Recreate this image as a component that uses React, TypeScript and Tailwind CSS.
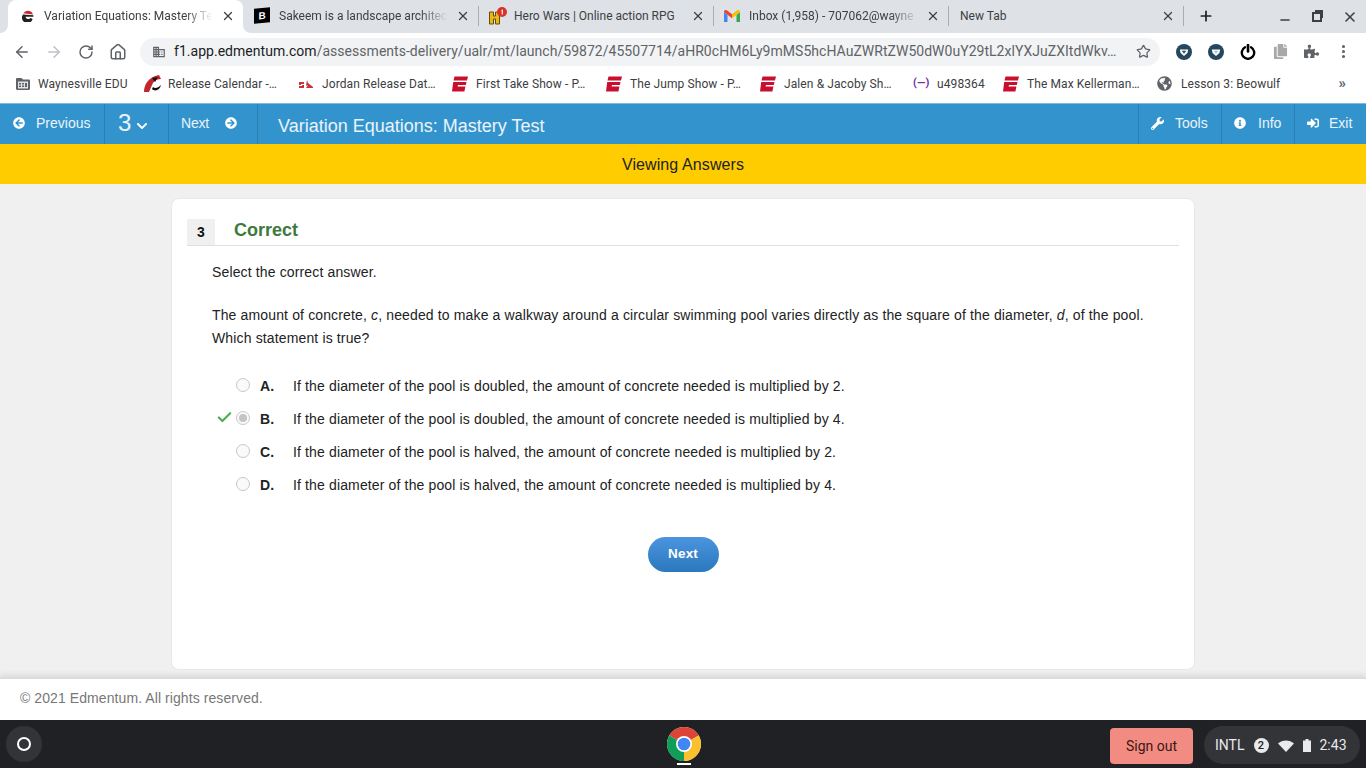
import React from 'react';
import { ArrowLeft, ArrowRight, RotateCw, Home, Star, X, Plus, Minus, MoreVertical, Check } from 'lucide-react';
import { FaArrowCircleLeft, FaArrowCircleRight, FaChevronDown, FaWrench, FaInfoCircle, FaSignInAlt, FaPuzzlePiece, FaCopy, FaGlobeAmericas } from 'react-icons/fa';

function EspnIcon() {
  return (
    <svg width="16" height="16" viewBox="0 0 16 16" className="shrink-0">
      <path d="M2.5 0.5H16L15 4.5H1.5ZM1.2 6H14.5L13.8 9H6L5.6 10.5H13.4L12.4 15.5H0Z" fill="#c8102e" />
    </svg>
  );
}

function ReleaseIcon() {
  return (
    <svg width="17" height="18" viewBox="0 0 17 18" className="shrink-0">
      <path d="M0 17C0 10 4 2 15 0L17 4C12 4 9 7 8 10L5 17Z" fill="#c1272d" />
      <path d="M9 12C11 14 14 13 17 10C16 15 11 17 8 14Z" fill="#111" />
      <path d="M8 3L11 7L14 2Z" fill="#111" />
    </svg>
  );
}

function JordanIcon() {
  return (
    <svg width="16" height="10" viewBox="0 0 16 10" className="shrink-0">
      <path d="M1 3H6V5H3V6H6V9H1V7H4V6H1ZM9 1L10 4L15 8V9H8L10 6L8 7Z" fill="#c8343a" />
    </svg>
  );
}

function HeroIcon() {
  return (
    <svg width="20" height="18" viewBox="0 0 20 18" className="shrink-0">
      <path d="M0.5 5H4.5V9H6.5V5H10.5V17H6.5V12H4.5V17H0.5Z" fill="#e8b71c" stroke="#6b4a08" strokeWidth="1" />
      <circle cx="13" cy="5" r="5" fill="#d9342b" />
      <path d="M12.5 3L13.8 2.4V7.5H12.7V3.8L12.2 4Z" fill="#fff" />
    </svg>
  );
}

function GmailIcon() {
  return (
    <svg width="16" height="12" viewBox="0 0 16 12" className="shrink-0">
      <path d="M0 2V12H3.5V5Z" fill="#4285f4" />
      <path d="M16 2V12H12.5V5Z" fill="#34a853" />
      <path d="M0 2C0 0 2 -0.5 3.5 0.7L8 4.2V8.3L0 2Z" fill="#ea4335" />
      <path d="M16 2C16 0 14 -0.5 12.5 0.7L8 4.2V8.3L16 2Z" fill="#fbbc04" />
    </svg>
  );
}

function BleacherIcon() {
  return (
    <span className="w-[16px] h-[15px] shrink-0 bg-black text-white text-[10px] leading-[15px] font-black text-center -skew-y-6 font-['Liberation_Sans',sans-serif]">
      B
    </span>
  );
}

function EdmentumIcon() {
  return (
    <svg width="12" height="12" viewBox="0 0 12 12" className="shrink-0">
      <path d="M1.2 3.3A5.5 5.5 0 0 1 11 4.5L1.2 3.3Z" fill="#c92a2a" />
      <path d="M1 4.5A5.4 5.4 0 1 0 10.6 9L8.6 8A3 3 0 0 1 3.4 6.8H11.4V5.2Z" fill="#222" />
    </svg>
  );
}

function ShieldIcon({ inner }: { inner: string }) {
  return (
    <svg width="16" height="16" viewBox="0 0 16 16" className="shrink-0">
      <circle cx="8" cy="8" r="8" fill="#24475f" />
      <path d="M3.8 5.4H12.2L11.4 9L8 12L4.6 9Z" fill="#fff" />
      <path d="M5.8 6.8H10.2L8 9.8Z" fill={inner} />
    </svg>
  );
}

function PowerIcon() {
  return (
    <svg width="16" height="16" viewBox="0 0 16 16" className="shrink-0">
      <path d="M5 3.2A6.2 6.2 0 1 0 11 3.2" fill="none" stroke="#000" strokeWidth="2.4" strokeLinecap="round" />
      <path d="M8 0.8V7.5" stroke="#000" strokeWidth="2.6" strokeLinecap="round" />
    </svg>
  );
}

function DomainIcon() {
  return (
    <svg width="14" height="14" viewBox="0 0 24 24" className="shrink-0" fill="#5f6368">
      <path d="M12 7V3H2v18h20V7H12zM6 19H4v-2h2v2zm0-4H4v-2h2v2zm0-4H4V9h2v2zm0-4H4V5h2v2zm4 12H8v-2h2v2zm0-4H8v-2h2v2zm0-4H8V9h2v2zm0-4H8V5h2v2zm10 12h-8v-2h2v-2h-2v-2h2v-2h-2V9h8v10zm-2-8h-2v2h2v-2zm0 4h-2v2h2v-2z" />
    </svg>
  );
}

function ManagedFolderIcon() {
  return (
    <svg width="14" height="12" viewBox="0 0 14 12" className="shrink-0">
      <path d="M1.2 0H5.5L7 1.6H12.8C13.5 1.6 14 2.1 14 2.8V10.8C14 11.5 13.5 12 12.8 12H1.2C0.5 12 0 11.5 0 10.8V1.2C0 0.5 0.5 0 1.2 0Z" fill="#5f6368" />
      <path d="M2 3.5H12V10.5H2Z" fill="#e3e4e6" />
      <path d="M3 5H5V6.5H3ZM3 7.5H5V9H3ZM6 5H8V6.5H6ZM6 7.5H8V9H6ZM9 5H11V9H9Z" fill="#5f6368" />
    </svg>
  );
}

function ChromeLogo() {
  return (
    <svg width="34" height="34" viewBox="0 0 34 34">
      <circle cx="17" cy="17" r="17" fill="#f1f3f4" />
      <path d="M17 17L2.3 8.5A17 17 0 0 1 31.7 8.5Z" fill="#db4437" />
      <path d="M17 17L31.7 8.5A17 17 0 0 1 17 34Z" fill="#fbc02d" />
      <path d="M17 17L17 34A17 17 0 0 1 2.3 8.5Z" fill="#0f9d58" />
      <circle cx="17" cy="17" r="8" fill="#fff" />
      <circle cx="17" cy="17" r="6.3" fill="#4285f4" />
    </svg>
  );
}

const tabs = [
  { icon: <BleacherIcon />, title: 'Sakeem is a landscape architec', fade: true },
  { icon: <HeroIcon />, title: 'Hero Wars | Online action RPG', fade: false },
  { icon: <GmailIcon />, title: 'Inbox (1,958) - 707062@wayne', fade: true },
];

const bookmarks = [
  { icon: <ManagedFolderIcon />, label: 'Waynesville EDU', w: 'w-[128px]', gap: 'gap-[8px]' },
  { icon: <ReleaseIcon />, label: 'Release Calendar -…', w: 'w-[154px]', gap: 'gap-[7px]' },
  { icon: <JordanIcon />, label: 'Jordan Release Dat…', w: 'w-[154px]', gap: 'gap-[8px]' },
  { icon: <EspnIcon />, label: 'First Take Show - P…', w: 'w-[154px]', gap: 'gap-[8px]' },
  { icon: <EspnIcon />, label: 'The Jump Show - P…', w: 'w-[154px]', gap: 'gap-[8px]' },
  { icon: <EspnIcon />, label: 'Jalen & Jacoby Sh…', w: 'w-[153px]', gap: 'gap-[8px]' },
  { icon: <span className="w-[16px] text-[#6a2ea8] text-[11px] font-bold text-center shrink-0">(—)</span>, label: 'u498364', w: 'w-[90px]', gap: 'gap-[8px]' },
  { icon: <EspnIcon />, label: 'The Max Kellerman…', w: 'w-[154px]', gap: 'gap-[8px]' },
  { icon: <FaGlobeAmericas className="w-[15px] h-[15px] text-[#5f6368] shrink-0" />, label: 'Lesson 3: Beowulf', w: 'w-[160px]', gap: 'gap-[9px]' },
];

const options = [
  { letter: 'A.', text: 'If the diameter of the pool is doubled, the amount of concrete needed is multiplied by 2.' },
  { letter: 'B.', text: 'If the diameter of the pool is doubled, the amount of concrete needed is multiplied by 4.', picked: true },
  { letter: 'C.', text: 'If the diameter of the pool is halved, the amount of concrete needed is multiplied by 2.' },
  { letter: 'D.', text: 'If the diameter of the pool is halved, the amount of concrete needed is multiplied by 4.' },
];

export default function App() {
  return (
    <div className="h-screen flex flex-col overflow-hidden bg-[#f0f0f0] font-['Liberation_Sans',sans-serif]">
      {/* browser chrome */}
      <div className="h-[33px] shrink-0 bg-[#dee1e6] flex items-center pl-[8px] pb-[2px] font-['Roboto',sans-serif] text-[12px] text-[#3c4043]">
        <div className="relative w-[235px] h-[33px] -mb-[2px] bg-white rounded-t-[8px] flex items-center pl-[14px] pr-[8px] pb-[2px]">
          <span className="absolute -left-[8px] bottom-0 w-[8px] h-[8px] bg-white">
            <span className="block w-[8px] h-[8px] bg-[#dee1e6] rounded-br-[8px]" />
          </span>
          <span className="absolute -right-[8px] bottom-0 w-[8px] h-[8px] bg-white">
            <span className="block w-[8px] h-[8px] bg-[#dee1e6] rounded-bl-[8px]" />
          </span>
          <EdmentumIcon />
          <span className="ml-[10px] flex-1 whitespace-nowrap [mask-image:linear-gradient(to_right,black_82%,transparent_98%)]">Variation Equations: Mastery Te</span>
          <X className="w-[14px] h-[14px] ml-[5px] text-[#3c4043] shrink-0" strokeWidth={2.2} />
        </div>
        {tabs.map((tab, i) => (
          <div key={i} className={`w-[235px] h-[20px] flex items-center pr-[8px] ${i > 0 ? 'pl-[10px] border-l border-[#a9acb0]' : 'pl-[11px]'}`}>
            <span className="w-[17px] flex items-center shrink-0">{tab.icon}</span>
            <span className={`ml-[8px] flex-1 whitespace-nowrap ${tab.fade ? '[mask-image:linear-gradient(to_right,black_82%,transparent_98%)]' : ''}`}>{tab.title}</span>
            <X className="w-[14px] h-[14px] ml-[5px] shrink-0" strokeWidth={2.2} />
          </div>
        ))}
        <div className="w-[235px] h-[20px] border-l border-[#a9acb0] flex items-center pl-[11px] pr-[8px]">
          <span className="flex-1">New Tab</span>
          <X className="w-[14px] h-[14px]" strokeWidth={2.2} />
        </div>
        <div className="h-[20px] border-l border-[#a9acb0] pl-[14px] flex items-center">
          <Plus className="w-[16px] h-[16px] text-[#202124]" strokeWidth={2.6} />
        </div>
        <div className="flex items-center ml-auto pr-[8px] gap-[20px] text-[#3c4043] mt-[2px]">
          <Minus className="w-[14px] h-[14px] mt-[6px]" strokeWidth={2.4} />
          <span className="relative w-[10px] h-[10px] border-2 border-[#3c4043]">
            <span className="absolute -top-[4px] -right-[3px] w-[8px] h-[8px] border-t-2 border-r-2 border-[#3c4043]" />
          </span>
          <X className="w-[16px] h-[16px]" strokeWidth={2.4} />
        </div>
      </div>

      <div className="h-[37px] shrink-0 bg-white flex items-center pl-[13px] pr-[12px] font-['Roboto',sans-serif]">
        <ArrowLeft className="w-[18px] h-[18px] text-[#5f6368]" strokeWidth={2} />
        <ArrowRight className="w-[18px] h-[18px] ml-[14px] text-[#bdc1c6]" strokeWidth={2} />
        <RotateCw className="w-[16px] h-[16px] ml-[15px] text-[#5f6368]" strokeWidth={2.2} />
        <Home className="w-[18px] h-[18px] ml-[15px] text-[#5f6368]" strokeWidth={2} />
        <div className="ml-[13px] w-[1020px] h-[28px] rounded-full bg-[#f1f3f4] flex items-center pl-[12px] pr-[9px]">
          <DomainIcon />
          <span className="ml-[8px] flex-1 text-[14px] tracking-[0.03px] whitespace-nowrap text-[#5f6368]">
            <span className="text-[#202124]">f1.app.edmentum.com</span>/assessments-delivery/ualr/mt/launch/59872/45507714/aHR0cHM6Ly9mMS5hcHAuZWRtZW50dW0uY29tL2xlYXJuZXItdWkv…
          </span>
          <Star className="ml-[16px] w-[15px] h-[15px] text-[#5f6368] shrink-0" strokeWidth={2} />
        </div>
        <div className="ml-[16px] flex flex-1 items-center justify-between pr-[5px]">
          <ShieldIcon inner="#24475f" />
          <ShieldIcon inner="#9fc1dc" />
          <PowerIcon />
          <FaCopy className="w-[15px] h-[15px] text-[#a8a8a8]" />
          <FaPuzzlePiece className="w-[15px] h-[15px] text-[#5f6368]" />
          <MoreVertical className="w-[17px] h-[17px] text-[#5f6368] -mr-[3px]" strokeWidth={2.4} />
        </div>
      </div>

      <div className="h-[33px] shrink-0 bg-white flex items-center pl-[16px] pr-[20px] pb-[6px] font-['Roboto',sans-serif] text-[12px] text-[#3c4043] tracking-[0.1px]">
        {bookmarks.map((item, i) => (
          <div key={i} className={`flex items-center shrink-0 whitespace-nowrap ${item.gap} ${item.w}`}>
            {item.icon}
            <span>{item.label}</span>
          </div>
        ))}
        <span className="ml-auto text-[15px] leading-none font-bold text-[#5f6368]">»</span>
      </div>

      {/* assessment nav */}
      <div className="h-[41px] shrink-0 bg-[#3393cd] border-t border-[#7fb9dd] flex items-stretch text-white/90 text-[14px]">
        <div className="w-[105px] border-r border-[#2a7fb3] flex items-center pl-[13px] pb-[2px]">
          <FaArrowCircleLeft className="w-[12px] h-[12px] text-white" />
          <span className="ml-[11px]">Previous</span>
        </div>
        <div className="w-[64px] border-r border-[#2a7fb3] flex items-center pl-[13px]">
          <span className="text-[24px] leading-none -mt-[2px]">3</span>
          <FaChevronDown className="w-[12px] h-[12px] ml-[5px] mt-[4px] text-white" />
        </div>
        <div className="w-[89px] border-r border-[#2a7fb3] flex items-center pl-[12px] pb-[2px]">
          <span className="tracking-[-0.2px]">Next</span>
          <FaArrowCircleRight className="w-[12px] h-[12px] ml-[16px] text-white" />
        </div>
        <div className="ml-[20px] flex items-center text-[18px] mt-[4px] flex-1">Variation Equations: Mastery Test</div>
        <div className="w-[83px] border-l border-[#2a7fb3] flex items-center pl-[12px] pb-[2px]">
          <FaWrench className="w-[13px] h-[13px] text-white" />
          <span className="ml-[11px]">Tools</span>
        </div>
        <div className="w-[73px] border-l border-[#2a7fb3] flex items-center pl-[12px] pb-[2px]">
          <FaInfoCircle className="w-[12px] h-[12px] text-white" />
          <span className="ml-[12px]">Info</span>
        </div>
        <div className="w-[72px] border-l border-[#2a7fb3] flex items-center pl-[12px] pb-[2px]">
          <FaSignInAlt className="w-[12px] h-[12px] text-white" />
          <span className="ml-[10px]">Exit</span>
        </div>
      </div>

      <div className="h-[40px] shrink-0 bg-[#ffcc00] flex items-center justify-center text-[16px] tracking-[0.1px] text-[#222] pt-[1px]">
        Viewing Answers
      </div>

      {/* question card */}
      <div className="flex-1 min-h-0 px-[171px] pt-[14px] pb-[7px]">
        <div className="h-full bg-white border border-[#e8e8e8] rounded-[8px] px-[15px] pt-[20px]">
          <div className="flex h-[27px] border-b border-[#e0e0e0]">
            <div className="w-[28px] bg-[#f0f0f0] text-center text-[14px] leading-[26px] font-bold text-[#111]">3</div>
            <div className="ml-[19px] text-[18px] leading-[22px] font-bold text-[#3d7a3d]">Correct</div>
          </div>
          <div className="pl-[25px] text-[14px] text-[#222] tracking-[0.14px]">
            <p className="mt-[15px] leading-[23px]">Select the correct answer.</p>
            <p className="mt-[20px] leading-[23px]">
              The amount of concrete, <i>c</i>, needed to make a walkway around a circular swimming pool varies directly as the square of the diameter, <i>d</i>, of the pool.
              <br />
              Which statement is true?
            </p>
            <div className="mt-[20px] flex flex-col">
              {options.map(option => (
                <div key={option.letter} className="h-[33px] flex items-center">
                  <span className="w-[24px] flex">
                    {option.picked && <Check className="w-[17px] h-[17px] ml-[4px] -mt-[5px] text-[#48b04e]" strokeWidth={3} />}
                  </span>
                  <span className="w-[14px] h-[14px] -mt-[4px] rounded-full border border-[#c8c8c8] bg-[#fafafa] flex items-center justify-center">
                    {option.picked && <span className="w-[8px] h-[8px] rounded-full bg-[#c4c4c4]" />}
                  </span>
                  <span className="ml-[10px] w-[33px] font-bold">{option.letter}</span>
                  <span>{option.text}</span>
                </div>
              ))}
            </div>
          </div>
          <div className="mt-[35px] flex justify-center">
            <div className="w-[71px] h-[35px] rounded-full bg-gradient-to-b from-[#4a95de] to-[#2b78be] flex items-center justify-center text-white font-bold text-[13.5px] tracking-[0.2px]">
              Next
            </div>
          </div>
        </div>
      </div>

      <div className="relative h-[43px] shrink-0 bg-white border-t-2 border-[#dcdcdc] shadow-[0_-3px_5px_rgba(0,0,0,0.08)] flex items-center pl-[20px] pb-[2px] text-[14px] text-[#777] tracking-[0.08px]">
        © 2021 Edmentum. All rights reserved.
      </div>

      {/* chromeos shelf */}
      <div className="h-[48px] shrink-0 bg-[#202124] relative flex items-center pl-[6px] pr-[6px] font-['Roboto',sans-serif]">
        <div className="w-[36px] h-[36px] rounded-full bg-[#333437] flex items-center justify-center">
          <span className="w-[14px] h-[14px] rounded-full border-2 border-white" />
        </div>
        <div className="absolute left-[667px] top-[7px]">
          <ChromeLogo />
        </div>
        <span className="absolute left-[677px] top-[43px] w-[14px] h-[2px] bg-white" />
        <div className="ml-auto flex items-center">
          <div className="w-[83px] h-[36px] mt-[4px] rounded-[4px] bg-[#f28b82] flex items-center justify-center text-[14px] text-[#3c1714]">
            Sign out
          </div>
          <div className="ml-[11px] w-[156px] h-[38px] mt-[2px] rounded-full bg-[#333437] flex items-center pl-[11px] pt-[1px] text-[14px] text-[#e8eaed]">
            <span>INTL</span>
            <span className="ml-[9px] w-[15px] h-[15px] rounded-full bg-[#e8eaed] text-[#202124] text-[11px] leading-[15px] text-center font-medium">2</span>
            <svg width="16" height="12" viewBox="0 0 16 12" className="ml-[9px]">
              <path d="M0 3.5C4.5 -0.5 11.5 -0.5 16 3.5L8 12Z" fill="#e8eaed" />
            </svg>
            <svg width="8" height="13" viewBox="0 0 8 13" className="ml-[9px]">
              <path d="M2.5 0H5.5V1.5H8V13H0V1.5H2.5Z" fill="#e8eaed" />
            </svg>
            <span className="ml-[9px]">2:43</span>
          </div>
        </div>
      </div>
    </div>
  );
}
